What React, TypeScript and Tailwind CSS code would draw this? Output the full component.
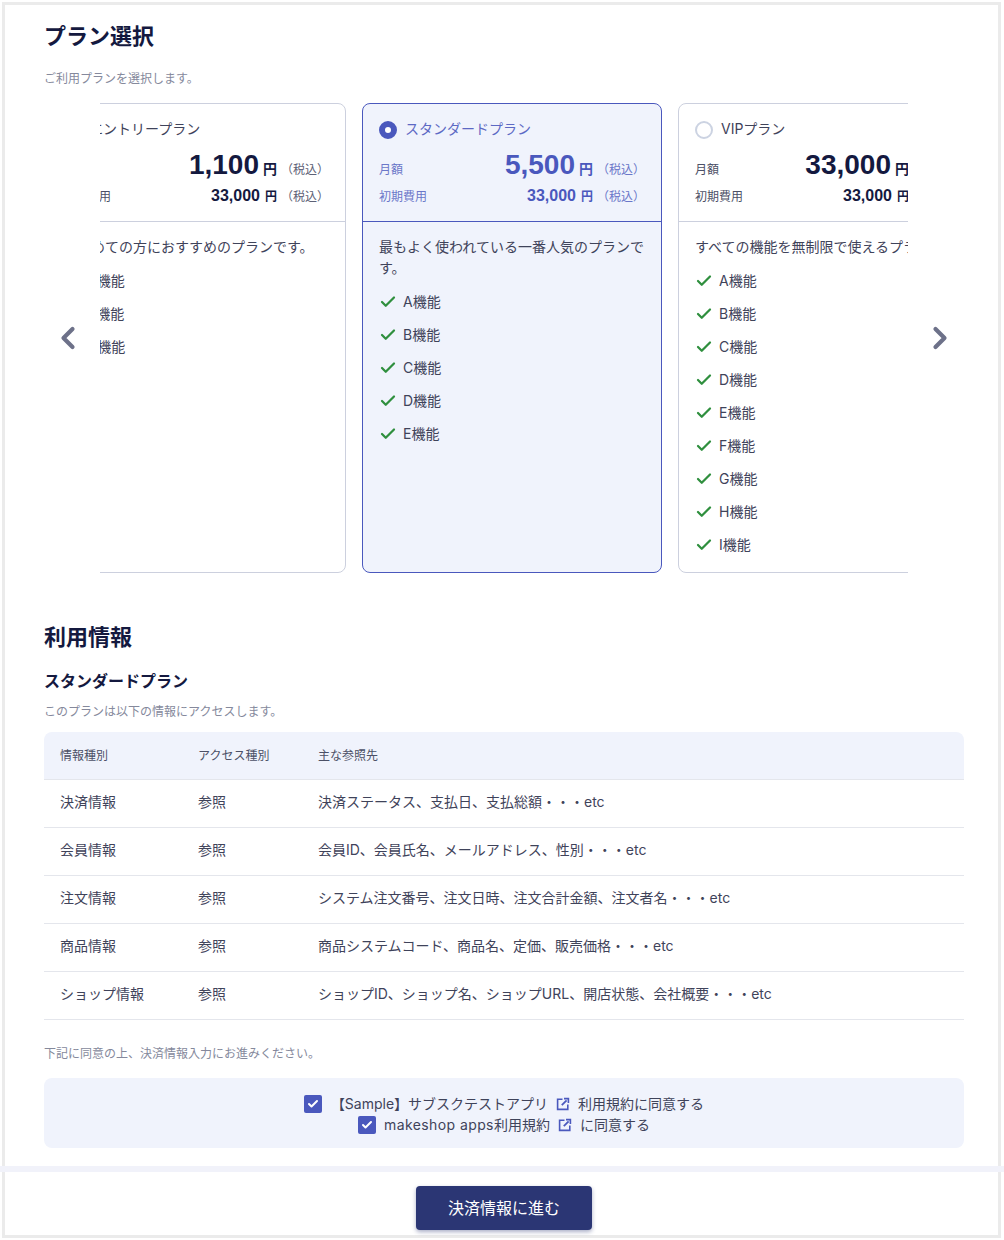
import { Check, ChevronLeft, ChevronRight } from "lucide-react";

const plans = [
  {
    name: "エントリープラン",
    price: "1,100",
    desc: "はじめての方におすすめのプランです。",
    features: ["A機能", "B機能", "C機能"],
  },
  {
    name: "スタンダードプラン",
    price: "5,500",
    desc: "最もよく使われている一番人気のプランです。",
    features: ["A機能", "B機能", "C機能", "D機能", "E機能"],
    selected: true,
  },
  {
    name: "VIPプラン",
    price: "33,000",
    desc: "すべての機能を無制限で使えるプラン。",
    features: ["A機能", "B機能", "C機能", "D機能", "E機能", "F機能", "G機能", "H機能", "I機能"],
  },
];

const rows = [
  ["決済情報", "決済ステータス、支払日、支払総額・・・etc"],
  ["会員情報", "会員ID、会員氏名、メールアドレス、性別・・・etc"],
  ["注文情報", "システム注文番号、注文日時、注文合計金額、注文者名・・・etc"],
  ["商品情報", "商品システムコード、商品名、定価、販売価格・・・etc"],
  ["ショップ情報", "ショップID、ショップ名、ショップURL、開店状態、会社概要・・・etc"],
];

function PlanCard({
  name,
  price,
  desc,
  features,
  selected,
}: {
  name: string;
  price: string;
  desc: string;
  features: string[];
  selected?: boolean;
}) {
  const accent = selected ? "text-[#4a58bd]" : "text-[#14193f]";
  const label = selected ? "text-[#6b77c9]" : "text-[#4c5066]";
  const note = selected ? "text-[#6b77c9]" : "text-[#5d6176]";
  const digits = '[font-family:"Liberation_Sans",sans-serif] font-bold';
  return (
    <div
      className={`w-[300px] h-[470px] shrink-0 rounded-lg border ${
        selected ? "border-[#4a58bd] bg-[#f0f3fc]" : "border-[#ccd0de] bg-white"
      }`}
    >
      <div className={`h-[118px] px-4 pt-[17px] border-b ${selected ? "border-[#4a58bd]" : "border-[#ccd0de]"}`}>
        <div className="flex items-center gap-2 h-[18px]">
          {selected ? (
            <span className="w-[18px] h-[18px] rounded-full border-[6px] border-[#4a58bd] bg-white" />
          ) : (
            <span className="w-[18px] h-[18px] rounded-full border-2 border-[#ccd3e2] bg-white" />
          )}
          <span className={`text-sm leading-[16px] pb-[2px] ${selected ? "text-[#5d69c4]" : "text-[#3f435a]"}`}>{name}</span>
        </div>
        <div className="flex items-baseline mt-[9px] h-[34px] leading-[34px]">
          <span className={`text-xs ${label}`}>月額</span>
          <span className={`ml-auto text-[28px] ${digits} ${accent}`}>{price}</span>
          <span className={`ml-[4px] text-sm font-semibold ${accent}`}>円</span>
          <span className={`ml-[4px] whitespace-nowrap text-xs ${note}`}>（税込）</span>
        </div>
        <div className="flex items-baseline mt-[2px] h-[26px] leading-[26px]">
          <span className={`text-xs ${label}`}>初期費用</span>
          <span className={`ml-auto text-base ${digits} ${accent}`}>33,000</span>
          <span className={`ml-[5px] text-xs font-semibold ${accent}`}>円</span>
          <span className={`ml-[4px] whitespace-nowrap text-xs ${note}`}>（税込）</span>
        </div>
      </div>
      <div className="px-4 pt-[14px]">
        <p className="text-sm leading-[21px] text-[#3f435a]">{desc}</p>
        <ul className="mt-[7px]">
          {features.map((f) => (
            <li key={f} className="flex items-center h-[33px] gap-[6px]">
              <Check className="w-[18px] h-[18px] text-[#2f8f3e]" strokeWidth={3} />
              <span className="text-sm text-[#3f435a]">{f}</span>
            </li>
          ))}
        </ul>
      </div>
    </div>
  );
}

function CheckBox() {
  return (
    <span className="w-[18px] h-[18px] rounded-[2px] bg-[#4a58bd] flex items-center justify-center shrink-0">
      <Check className="w-3 h-3 text-white" strokeWidth={4} />
    </span>
  );
}

function LinkIcon({ className }: { className?: string }) {
  return (
    <svg viewBox="0 0 14 14" fill="none" stroke="#4a58bd" className={`w-[14px] h-[14px] shrink-0 ${className ?? ""}`}>
      <path d="M6.5 2.2H1.6v10.2h10.2V7.5" strokeWidth="1.6" />
      <path d="M5.8 8.2L10.6 3.4" strokeWidth="1.8" />
      <path d="M8 1.6h4.4V6" strokeWidth="1.6" />
    </svg>
  );
}

export default function App() {
  return (
    <div className='[font-family:Inter,"Noto_Sans_CJK_JP",sans-serif] w-[1004px] h-[1240px] bg-white pt-[2px] pb-[2px] pl-[2px] pr-[3px] flex flex-col'>
      <div className="flex-1 flex flex-col border-[3px] border-[#ebebeb]">
        <div className="flex-1 pl-[39px] pr-[34px]">
          <h1 className="text-[22px] leading-[32px] font-bold text-[#14193f] mt-[15px]">プラン選択</h1>
          <p className="text-xs leading-[18px] text-[#85899c] mt-[18px]">ご利用プランを選択します。</p>

          <div className="flex items-center mt-[15px]">
            <div className="w-[56px] flex justify-start pl-[6px] shrink-0">
              <ChevronLeft className="w-9 h-9 text-[#6d7189]" strokeWidth={2.8} />
            </div>
            <div className="w-[808px] overflow-hidden shrink-0">
              <div className="flex gap-4 -ml-[54px]">
                {plans.map((p) => (
                  <PlanCard key={p.name} {...p} />
                ))}
              </div>
            </div>
            <div className="w-[56px] flex justify-end pr-[6px] shrink-0">
              <ChevronRight className="w-9 h-9 text-[#6d7189]" strokeWidth={2.8} />
            </div>
          </div>

          <h2 className="text-[22px] leading-[32px] font-bold text-[#14193f] mt-[48px]">利用情報</h2>
          <h3 className="text-base leading-6 font-bold text-[#14193f] mt-[16px]">スタンダードプラン</h3>
          <p className="text-xs leading-[18px] text-[#85899c] mt-[10px]">このプランは以下の情報にアクセスします。</p>

          <div className="mt-[11px]">
            <div className="flex h-[48px] pt-[1px] items-center bg-[#f0f3fc] rounded-t-lg border-b border-[#e4e6ec] text-xs text-[#4c5066]">
              <span className="w-[154px] pl-4">情報種別</span>
              <span className="w-[120px]">アクセス種別</span>
              <span>主な参照先</span>
            </div>
            {rows.map(([kind, refs]) => (
              <div key={kind} className="flex h-[48px] pb-[3px] items-center border-b border-[#e4e6ec] text-sm text-[#3f435a]">
                <span className="w-[154px] pl-4">{kind}</span>
                <span className="w-[120px]">参照</span>
                <span>{refs}</span>
              </div>
            ))}
          </div>

          <p className="text-xs leading-[18px] text-[#85899c] mt-[25px]">下記に同意の上、決済情報入力にお進みください。</p>

          <div className="mt-[15px] h-[70px] pt-[2px] rounded-lg bg-[#f0f3fc] flex flex-col items-center justify-center gap-[3px] text-sm text-[#3f435a]">
            <div className="flex items-center h-[18px]">
              <CheckBox />
              <span className="ml-[9px]">【Sample】サブスクテストアプリ</span>
              <LinkIcon className="ml-[8px]" />
              <span className="ml-[8px]">利用規約に同意する</span>
            </div>
            <div className="flex items-center h-[18px]">
              <CheckBox />
              <span className="ml-[8px]">
                <span className="tracking-[0.4px]">makeshop apps</span>利用規約
              </span>
              <LinkIcon className="ml-[8px]" />
              <span className="ml-[8px]">に同意する</span>
            </div>
          </div>
        </div>
        <div className="h-[6px] -ml-[5px] -mr-[6px] bg-[#f1f2fa] relative" />
        <div className="h-[63px] pl-[39px] pr-[34px] flex justify-center pt-[14px]">
          <button className="w-[176px] h-[44px] rounded-[4px] bg-[#2b3674] text-white text-base shadow-[0_2px_4px_rgba(43,54,116,0.4)]">
            決済情報に進む
          </button>
        </div>
      </div>
    </div>
  );
}
